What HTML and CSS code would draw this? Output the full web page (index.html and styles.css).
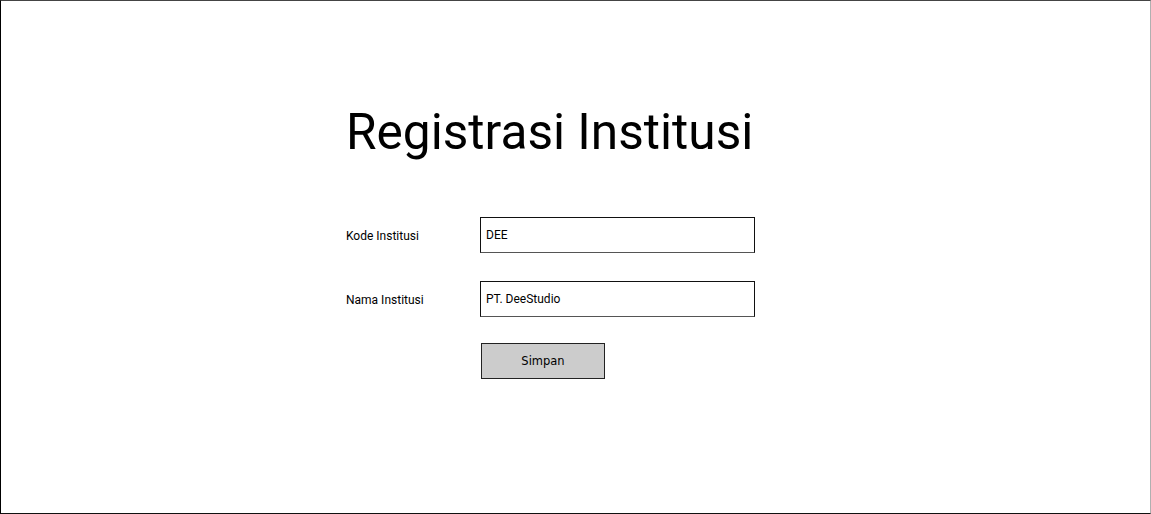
FILE: index.html
```html
<!DOCTYPE html>
<html lang="id">
<head>
<meta charset="utf-8">
<title>Registrasi Institusi</title>
<link rel="stylesheet" href="styles.css">
</head>
<body>
<div class="frame">
  <div class="content">
    <h1 class="title">Registrasi Institusi</h1>
    <div class="form">
      <div class="row">
        <label class="label">Kode Institusi</label>
        <div class="input">DEE</div>
      </div>
      <div class="row">
        <label class="label">Nama Institusi</label>
        <div class="input">PT. DeeStudio</div>
      </div>
      <div class="row actions">
        <div class="label"></div>
        <button class="btn" type="button">Simpan</button>
      </div>
    </div>
  </div>
</div>
</body>
</html>
```

FILE: styles.css
```css
html, body {
  margin: 0;
  padding: 0;
  background: #ffffff;
}
body {
  font-family: Roboto, "Liberation Sans", sans-serif;
  color: #000;
}
.frame {
  box-sizing: border-box;
  width: 1151px;
  height: 514px;
  border-top: 1px solid #444;
  border-left: 1px solid #000;
  border-right: 1px solid #b0b0b0;
  border-bottom: 1px solid #111;
  padding-left: 345px;
  background: #fff;
}
.content {
  display: flex;
  flex-direction: column;
}
.title {
  margin: 102px 0 0 0;
  font-size: 49.6px;
  line-height: 58px;
  font-weight: 400;
}
.form {
  margin-top: 56px;
  display: flex;
  flex-direction: column;
  gap: 28px;
}
.row {
  display: flex;
  align-items: flex-start;
}
.label {
  width: 134px;
  font-size: 12px;
  line-height: 14px;
  padding-top: 12px;
}
.input {
  box-sizing: border-box;
  width: 275px;
  height: 36px;
  border: 1px solid #111;
  border-bottom-color: #555;
  padding: 10px 5px 0;
  font-size: 12px;
  line-height: 14px;
}
.actions {
  margin-top: -2px;
}
.actions .label {
  width: 135px;
  padding: 0;
}
.btn {
  box-sizing: border-box;
  width: 124px;
  height: 36px;
  background: #cccccc;
  border: 1px solid #222;
  border-radius: 0;
  padding: 0;
  font-family: "DejaVu Sans", sans-serif;
  font-size: 11.5px;
  color: #000;
}
```
